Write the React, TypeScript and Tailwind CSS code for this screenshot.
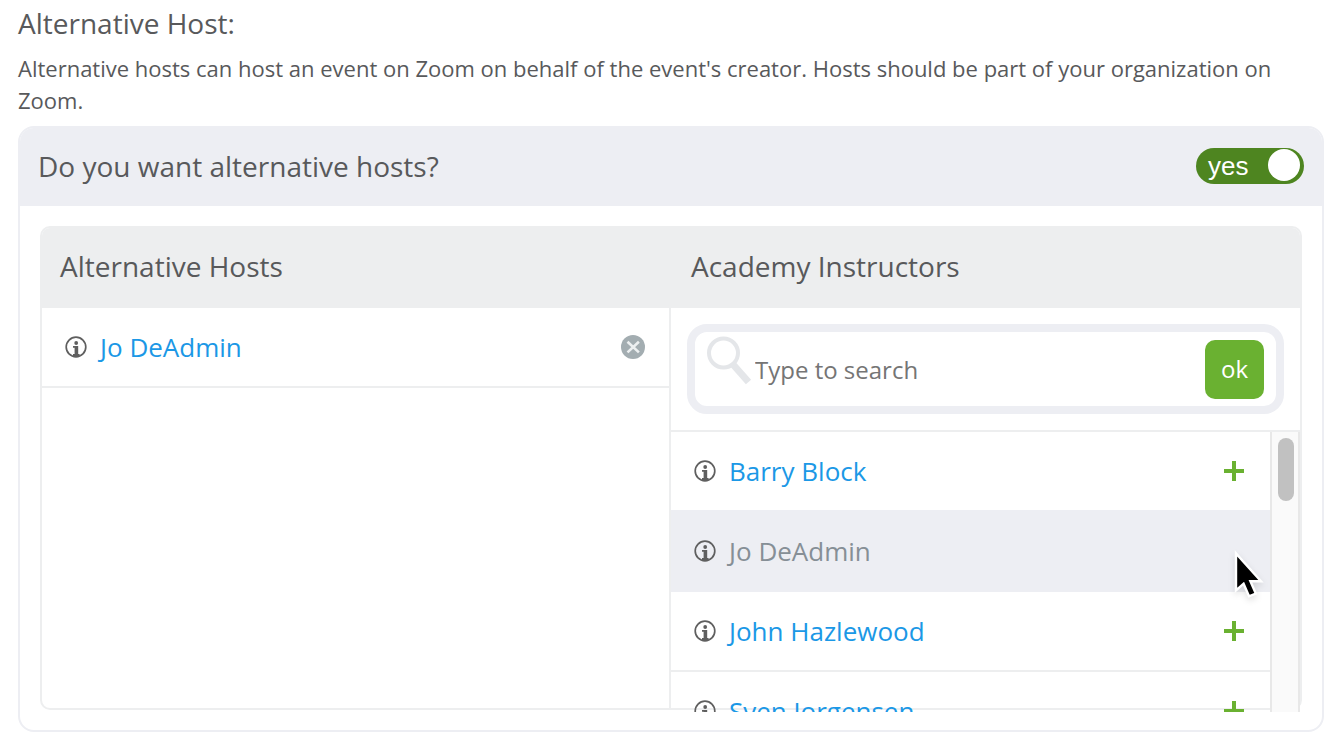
import { useState } from "react";

type Person = {
  id: number;
  name: string;
};

const instructors: Person[] = [
  { id: 1, name: "Barry Block" },
  { id: 2, name: "Jo DeAdmin" },
  { id: 3, name: "John Hazlewood" },
  { id: 4, name: "Sven Jorgensen" },
];

const InfoIcon = () => (
  <svg width="24" height="24" viewBox="0 0 24 24" fill="none" className="shrink-0">
    <circle cx="12" cy="12" r="9.8" stroke="#5f5f5f" strokeWidth="1.7" />
    <circle cx="12.2" cy="8" r="1.9" fill="#5f5f5f" />
    <path d="M9 11h5.2v8h1.4v2H9v-2h1.6v-6.2H9z" fill="#5f5f5f" />
  </svg>
);

const RemoveIcon = () => (
  <svg width="24" height="24" viewBox="0 0 24 24" fill="none">
    <circle cx="12" cy="12" r="12" fill="#a3adb1" />
    <path d="M6.5 6.8l11.4 10.6M17.9 6.8L6.5 17.4" stroke="#eceff0" strokeWidth="2.6" />
  </svg>
);

const PlusIcon = () => (
  <svg width="24" height="24" viewBox="0 0 24 24" fill="none">
    <path d="M2 12h20M12 2v20" stroke="#6ab131" strokeWidth="4" />
  </svg>
);

const SearchIcon = () => (
  <svg width="48" height="52" viewBox="0 0 48 52" fill="none" className="shrink-0">
    <circle cx="18.5" cy="20" r="14.5" stroke="#e4e6e9" strokeWidth="4" />
    <path d="M28.5 32L43.5 49" stroke="#e4e6e9" strokeWidth="7" />
  </svg>
);

const Cursor = () => (
  <svg
    width="34"
    height="52"
    viewBox="0 0 34 52"
    className="pointer-events-none absolute top-[118px] right-8 drop-shadow-md"
  >
    <path
      d="M2 3.5v36.8l7.6-6.6 5.4 12.6 6.8-2.8-5.4-12.2h10.6z"
      fill="#000"
      stroke="#fff"
      strokeWidth="2.4"
    />
  </svg>
);

const App = () => {
  const [enabled, setEnabled] = useState(true);
  const [hosts, setHosts] = useState<Person[]>([instructors[1]]);
  const [search, setSearch] = useState("");

  const isHost = (person: Person) => hosts.some((host) => host.id === person.id);

  return (
    <main className="bg-white pr-3 pb-3 pl-[18px] font-['Open_Sans','Noto_Sans',sans-serif] text-[#58595b]">
      <h1 className="pt-[3px] text-[28px] leading-10">Alternative Host:</h1>
      <p className="mt-[9px] text-[22px] leading-8">
        Alternative hosts can host an event on Zoom on behalf of the event's creator. Hosts should
        be part of your organization on Zoom.
      </p>

      <section className="mt-[10px] rounded-2xl border-2 border-[#edeef3]">
        <div className="flex h-[78px] items-center justify-between rounded-t-[14px] bg-[#edeef3] px-[18px] pb-[2px]">
          <h2 className="text-[28px] leading-10">Do you want alternative hosts?</h2>
          <label className="relative flex h-9 w-[108px] cursor-pointer items-center rounded-full bg-[#4e8520] pl-3 font-['Liberation_Sans',Arial,sans-serif] text-[26px] leading-9 text-white">
            <input
              type="checkbox"
              role="switch"
              aria-label="Do you want alternative hosts?"
              checked={enabled}
              onChange={() => setEnabled(!enabled)}
              className="sr-only"
            />
            {enabled ? "yes" : "no"}
            <span className="absolute top-px right-1 size-8 rounded-full bg-white" />
          </label>
        </div>

        <div className="p-5">
          <div className="rounded-[10px] border-2 border-[#edeeef]">
            <div className="grid h-20 grid-cols-2 items-center rounded-t-lg bg-[#edeeef] pb-1 text-[28px] leading-10">
              <h3 className="pl-[18px]">Alternative Hosts</h3>
              <h3 className="pl-5">Academy Instructors</h3>
            </div>

            <div className="grid grid-cols-2">
              <ul className="border-r-2 border-[#edeeef]">
                {hosts.map((host) => (
                  <li
                    key={host.id}
                    className="flex h-20 items-center border-b-2 border-[#edeeef] pr-6 pl-[22px]"
                  >
                    <InfoIcon />
                    <a href="#" className="ml-3 text-[26px] leading-9 text-[#1b98e6]">
                      {host.name}
                    </a>
                    <button
                      type="button"
                      aria-label={`Remove ${host.name}`}
                      onClick={() => setHosts(hosts.filter((h) => h.id !== host.id))}
                      className="ml-auto"
                    >
                      <RemoveIcon />
                    </button>
                  </li>
                ))}
              </ul>

              <div className="-mb-1">
                <div className="border-b-2 border-[#edeeef] p-4">
                  <form
                    onSubmit={(e) => e.preventDefault()}
                    className="flex h-[90px] items-center rounded-[20px] border-8 border-[#edeef3] pr-3 pl-[10px]"
                  >
                    <div className="-mt-5">
                      <SearchIcon />
                    </div>
                    <input
                      type="text"
                      aria-label="Search instructors"
                      placeholder="Type to search"
                      value={search}
                      onChange={(e) => setSearch(e.target.value)}
                      className="min-w-0 flex-1 pt-[2px] pl-[2px] text-[24px] leading-9 outline-none placeholder:text-[#757575]"
                    />
                    <button
                      type="submit"
                      className="size-[59px] rounded-[10px] bg-[#6ab131] text-[24px] leading-9 text-white"
                    >
                      ok
                    </button>
                  </form>
                </div>

                <div className="relative flex h-[280px]">
                  <ul className="flex-1 overflow-hidden">
                    {instructors.map((person) => (
                      <li
                        key={person.id}
                        className={`flex items-center border-b-2 pr-6 pl-[22px] ${
                          isHost(person)
                            ? "-mt-[2px] h-[82px] border-[#edeef3] bg-[#edeef3] pt-[2px]"
                            : "h-20 border-[#edeeef]"
                        }`}
                      >
                        <InfoIcon />
                        <a
                          href="#"
                          className={`ml-3 text-[26px] leading-9 ${
                            isHost(person) ? "text-[#868f96]" : "text-[#1b98e6]"
                          }`}
                        >
                          {person.name}
                        </a>
                        {!isHost(person) && (
                          <button
                            type="button"
                            aria-label={`Add ${person.name}`}
                            onClick={() => setHosts([...hosts, person])}
                            className="ml-auto"
                          >
                            <PlusIcon />
                          </button>
                        )}
                      </li>
                    ))}
                  </ul>
                  <div className="w-[30px] border-x-2 border-[#e8e8e8] bg-[#fafafa] px-[6px] pt-[6px]">
                    <div className="h-[63px] w-4 rounded-full bg-[#c1c1c1]" />
                  </div>
                  <Cursor />
                </div>
              </div>
            </div>
          </div>
        </div>
      </section>
    </main>
  );
};

export default App;
